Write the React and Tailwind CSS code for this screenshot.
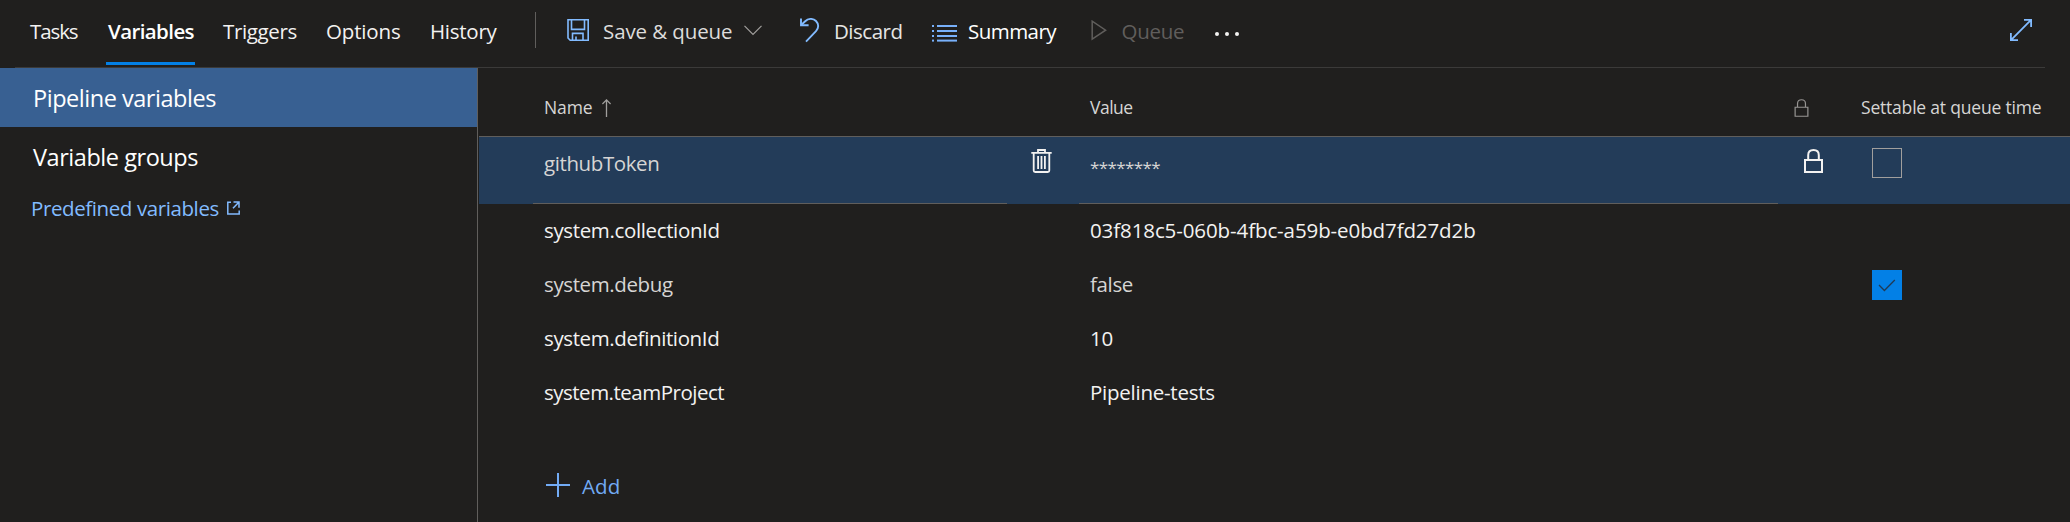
import React from 'react';

function SaveIcon() {
  return (
    <svg width="22" height="22" viewBox="0 0 22 22" fill="none" stroke="#82bbff" strokeWidth="1.6">
      <path d="M1 .8H21.2V21.2H3.2L1 19V.8Z" />
      <path d="M4.5 .8V10.4H17.5V.8M5.5 21V14.4H16V21M9 21V17.6" />
    </svg>
  );
}

function ChevronIcon() {
  return (
    <svg width="18" height="11" viewBox="0 0 18 11" fill="none" stroke="#a19f9d" strokeWidth="1.2">
      <path d="M.5 .8 9 9.3 17.5 .8" />
    </svg>
  );
}

function UndoIcon() {
  return (
    <svg width="20" height="25" viewBox="0 0 20 25" fill="none" stroke="#82bbff" strokeWidth="1.9">
      <path d="M1 .4V7.3H8.6" />
      <path d="M1.2 7 5.2 3.2C8.4 .2 13.2 .2 16 3C18.9 5.9 18.9 10.3 16 13.2L6 23.6" />
    </svg>
  );
}

function ListIcon() {
  return (
    <svg width="25" height="17" viewBox="0 0 25 17" fill="#78b0fa">
      {[0, 5, 10, 14.6].map((y) => (
        <g key={y}>
          <rect x="0" y={y} width="2" height="2" />
          <rect x="5" y={y} width="20" height="2" />
        </g>
      ))}
    </svg>
  );
}

function PlayIcon() {
  return (
    <svg width="16" height="21" viewBox="0 0 16 21" fill="none" stroke="#605e5c" strokeWidth="1.5">
      <path d="M1.2 1.2V19.2L14.6 10.2Z" />
    </svg>
  );
}

function ExpandIcon() {
  return (
    <svg width="22" height="22" viewBox="0 0 22 22" fill="none" stroke="#82bbff" strokeWidth="1.8">
      <path d="M1.2 20.8 20.8 1.2M14 .9H21.1V8M.9 14V21.1H8" />
    </svg>
  );
}

function LockIcon({ className, strokeWidth }) {
  return (
    <svg className={className} viewBox="0 0 19 24" fill="none" stroke="currentColor" strokeWidth={strokeWidth}>
      <path d="M1 11H18V23H1ZM4.2 11V6.2C4.2 3 6.3 1 9.5 1S14.8 3 14.8 6.2V11" />
    </svg>
  );
}

function TrashIcon() {
  return (
    <svg width="21" height="24" viewBox="0 0 21 24" fill="none" stroke="#f3f2f1" strokeWidth="1.8">
      <path d="M.3 3.9H20.7M7 3.7V1H14V3.7M2.7 4V21.5Q2.7 23 4.2 23H16.8Q18.3 23 18.3 21.5V4" />
      <path d="M7.1 7V20M10.5 7V20M13.9 7V20" />
    </svg>
  );
}

function ExternalIcon() {
  return (
    <svg width="13" height="14" viewBox="0 0 13 14" fill="none" stroke="#82bbff" strokeWidth="1.5">
      <path d="M4 1.2H.8V13H12.2V9.5M6.5 1H12V6.8M11.8 1.2 6 7.2" />
    </svg>
  );
}

const rows = [
  { name: 'system.collectionId', nameClass: 'tracking-[-0.36px]', value: '03f818c5-060b-4fbc-a59b-e0bd7fd27d2b', valueClass: 'tracking-[-0.1px]' },
  { name: 'system.debug', nameClass: 'tracking-[-0.38px] text-[#d6d5d4]', value: 'false', valueClass: 'tracking-[-0.35px] text-[#d6d5d4]', checked: true },
  { name: 'system.definitionId', nameClass: 'tracking-[-0.38px]', value: '10', valueClass: 'tracking-[-0.2px]' },
  { name: 'system.teamProject', nameClass: 'tracking-[-0.5px]', value: 'Pipeline-tests', valueClass: 'tracking-[-0.25px]' },
];

function Toolbar() {
  return (
    <header className="ml-[15px] mr-[25px] flex h-[68px] items-start border-b border-[#3b3a39] pl-[15px] text-[#f3f2f1]">
      <nav className="flex leading-[62px]">
        <a className="w-[76px] tracking-[-1.1px]">Tasks</a>
        <a className="mr-[28px] h-[65px] w-[89px] border-b-3 border-[#0380e6] pl-[2px] font-semibold tracking-[-0.6px] text-white">Variables</a>
        <a className="w-[103px] tracking-[-0.35px]">Triggers</a>
        <a className="w-[104px] tracking-[-0.15px]">Options</a>
        <a className="w-[105px] tracking-[-0.25px]">History</a>
      </nav>
      <div className="mt-[12px] h-[36px] w-px bg-[#605e5c]" />
      <div className="flex h-[62px] items-center pl-[31px] leading-[62px]">
        <button className="flex w-[233px] items-center text-[#dddcdb]">
          <span className="mt-[-2px] w-[36px]"><SaveIcon /></span>
          <span className="w-[141px] text-left tracking-[-0.1px]">Save &amp; queue</span>
          <span className="mt-[-1px]"><ChevronIcon /></span>
        </button>
        <button className="flex w-[132px] items-center text-[#e6e5e4]">
          <span className="mt-[-2px] w-[34px]"><UndoIcon /></span>
          <span className="tracking-[-0.5px]">Discard</span>
        </button>
        <button className="flex w-[159px] items-center text-white">
          <span className="mt-[4px] w-[36px]"><ListIcon /></span>
          <span className="tracking-[-0.55px]">Summary</span>
        </button>
        <button className="flex w-[124px] items-center text-[#605e5c]">
          <span className="mt-[-2px] w-[30.5px]"><PlayIcon /></span>
          <span className="tracking-[-0.25px]">Queue</span>
        </button>
        <button className="flex gap-[6px] pt-[5px]">
          <span className="size-[4px] rounded-full bg-[#f3f2f1]" />
          <span className="size-[4px] rounded-full bg-[#f3f2f1]" />
          <span className="size-[4px] rounded-full bg-[#f3f2f1]" />
        </button>
      </div>
      <button className="mt-[19px] mr-[13px] ml-auto"><ExpandIcon /></button>
    </header>
  );
}

function Sidebar() {
  return (
    <aside className="w-[478px] shrink-0 border-r border-[#605e5c] text-[23.5px] text-white">
      <div className="h-[59px] bg-[#386092] pl-[33px] leading-[60px] tracking-[-0.47px]">Pipeline variables</div>
      <div className="h-[59px] pl-[33px] leading-[61px] tracking-[-0.45px]">Variable groups</div>
      <div className="flex h-[44px] items-center pl-[31px] text-[20.5px] leading-[44px] text-[#82bbff]">
        <span className="w-[196px] tracking-[-0.4px]">Predefined variables</span>
        <ExternalIcon />
      </div>
    </aside>
  );
}

export default function App() {
  return (
    <div className="flex h-[522px] w-[2070px] flex-col overflow-hidden bg-[#201f1e] font-['Open_Sans',sans-serif] text-[20.5px] whitespace-nowrap">
      <Toolbar />
      <div className="flex min-h-0 flex-1">
        <Sidebar />
        <main className="min-w-0 flex-1 pl-px text-[#f3f2f1]">
          <div className="flex h-[69px] items-center border-b border-[#605e5c] pt-[11px] pl-[65px] text-[17.5px] text-[#d6d5d4]">
            <div className="flex w-[546px] items-center">
              <span className="w-[58px] tracking-[-0.1px]">Name</span>
              <svg width="9" height="18" viewBox="0 0 9 18" fill="none" stroke="#a19f9d" strokeWidth="1.3">
                <path d="M4.5 18V1M.4 5 4.5 .9 8.6 5" />
              </svg>
            </div>
            <span className="w-[704px] tracking-[-0.5px]">Value</span>
            <span className="w-[67px]"><LockIcon className="h-[18px] w-[15px] text-[#979593]" strokeWidth="1.6" /></span>
            <span className="tracking-[-0.2px]">Settable at queue time</span>
          </div>

          <div className="flex h-[67px] bg-[#233c59] pl-[54px] leading-[52px]">
            <div className="w-[474px] border-b border-[#605e5c] pl-[11px] tracking-[-0.4px] text-[#d6d5d4]">githubToken</div>
            <div className="w-[72px] pt-[12px] pl-[24px]"><TrashIcon /></div>
            <div className="w-[699px] border-b border-[#605e5c] pt-[5px] pl-[11px] text-[17px] font-medium tracking-[-0.6px] text-[#d6d5d4]">********</div>
            <div className="w-[94px] pt-[12px] pl-[26px]"><LockIcon className="h-[24px] w-[19px] text-[#f3f2f1]" strokeWidth="2" /></div>
            <div className="mt-[11px] size-[30px] border border-[#a19f9d]" />
          </div>

          {rows.map((row) => (
            <div key={row.name} className="flex h-[54px] items-center pl-[65px] leading-[52px]">
              <div className={`h-[54px] w-[546px] ${row.nameClass}`}>{row.name}</div>
              <div className={`h-[54px] w-[782px] ${row.valueClass}`}>{row.value}</div>
              {row.checked && (
                <div className="flex size-[30px] items-center justify-center bg-[#0380e6]">
                  <svg width="18" height="13" viewBox="0 0 18 13" fill="none" stroke="#203a55" strokeWidth="1.3">
                    <path d="M1 6 6.4 11.5 16.8 1" />
                  </svg>
                </div>
              )}
            </div>
          ))}

          <button className="mt-[32px] flex h-[66px] items-center pl-[67px] text-[#72abf5]">
            <svg className="mr-[12px]" width="24" height="24" viewBox="0 0 24 24" fill="none" stroke="#72abf5" strokeWidth="2">
              <path d="M0 12H24M12 0V24" />
            </svg>
            <span className="pt-[2px] tracking-[0.1px]">Add</span>
          </button>
        </main>
      </div>
    </div>
  );
}
